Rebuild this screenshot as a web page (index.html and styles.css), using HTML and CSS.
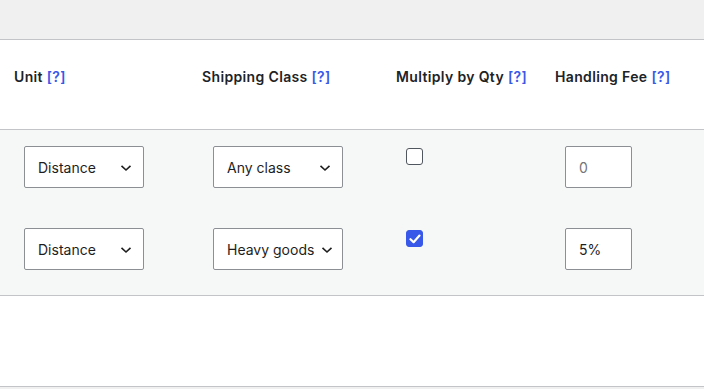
FILE: index.html
```html
<!DOCTYPE html>
<html>
<head>
<meta charset="utf-8">
<link rel="stylesheet" href="styles.css">
</head>
<body>
<div class="topbar"></div>
<div class="table">
  <div class="row head">
    <div class="th">Unit <a class="help">[?]</a></div>
    <div class="th">Shipping Class <a class="help">[?]</a></div>
    <div class="th">Multiply by Qty <a class="help">[?]</a></div>
    <div class="th">Handling Fee <a class="help">[?]</a></div>
  </div>
  <div class="body">
    <div class="row">
      <div class="td"><div class="select unit"><span>Distance</span><svg class="chev" width="12" height="8" viewBox="0 0 12 8"><path d="M1.5 1.8 L6 6 L10.5 1.8" fill="none" stroke="#1e1e1e" stroke-width="1.6"/></svg></div></div>
      <div class="td td2"><div class="select cls"><span>Any class</span><svg class="chev" width="12" height="8" viewBox="0 0 12 8"><path d="M1.5 1.8 L6 6 L10.5 1.8" fill="none" stroke="#1e1e1e" stroke-width="1.6"/></svg></div></div>
      <div class="td"><span class="check"></span></div>
      <div class="td"><div class="input placeholder">0</div></div>
    </div>
    <div class="row">
      <div class="td"><div class="select unit"><span>Distance</span><svg class="chev" width="12" height="8" viewBox="0 0 12 8"><path d="M1.5 1.8 L6 6 L10.5 1.8" fill="none" stroke="#1e1e1e" stroke-width="1.6"/></svg></div></div>
      <div class="td td2"><div class="select cls tight"><span>Heavy goods</span><svg class="chev" width="12" height="8" viewBox="0 0 12 8"><path d="M1.5 1.8 L6 6 L10.5 1.8" fill="none" stroke="#1e1e1e" stroke-width="1.6"/></svg></div></div>
      <div class="td"><span class="check on"><svg width="12" height="10" viewBox="0 0 12 10"><path d="M1.5 5.2 L4.6 8.2 L10.5 1.6" fill="none" stroke="#fff" stroke-width="2.2" stroke-linecap="round" stroke-linejoin="round"/></svg></span></div>
      <div class="td"><div class="input">5%</div></div>
    </div>
  </div>
  <div class="empty"></div>
</div>
<div class="footer"></div>
</body>
</html>
```
FILE: styles.css
```css
html, body {
  margin: 0;
  padding: 0;
  background: #f0f0f0;
  font-family: Inter, "Liberation Sans", Arial, sans-serif;
  color: #1d2327;
}
.topbar {
  height: 39px;
  background: #f0f0f0;
  border-bottom: 1px solid #c3c4c7;
}
.table {
  background: #fff;
}
.row {
  display: grid;
  grid-template-columns: 188px 194px 159px 1fr;
  padding-left: 14px;
}
.head {
  height: 62px;
  padding-top: 27px;
  border-bottom: 1px solid #c3c4c7;
  background: #fff;
}
.th {
  font-size: 14px;
  line-height: 20px;
  font-weight: 600;
  letter-spacing: 0.35px;
  color: #1d2327;
}
.help {
  color: #3858e9;
  font-weight: 600;
}
.body {
  background: #f6f7f7;
  border-bottom: 1px solid #c3c4c7;
  padding-bottom: 1px;
}
.body .row {
  padding-top: 16px;
  padding-bottom: 24px;
}
.td {
  padding-left: 10px;
}
.td2 {
  padding-left: 11px;
}
.select {
  box-sizing: border-box;
  height: 42px;
  border: 1px solid #8c8f94;
  border-radius: 2px;
  background: #fff;
  display: flex;
  align-items: center;
  justify-content: space-between;
  padding: 0 11px 0 13px;
  font-size: 14px;
  color: #1e1e1e;
}
.select.unit { width: 120px; }
.select.cls { width: 130px; }
.select.tight { padding-right: 9px; }
.chev { display: block; margin-top: 1px; }
.check {
  box-sizing: border-box;
  display: flex;
  align-items: center;
  justify-content: center;
  width: 17px;
  height: 17px;
  margin-top: 2px;
  border: 1.5px solid #50575e;
  border-radius: 3px;
  background: #fff;
}
.check.on {
  background: #3858e9;
  border-color: #3858e9;
}
.input {
  box-sizing: border-box;
  width: 67px;
  height: 42px;
  border: 1px solid #8c8f94;
  border-radius: 2px;
  background: #fff;
  display: flex;
  align-items: center;
  padding-left: 13px;
  font-size: 14px;
  color: #1e1e1e;
}
.input.placeholder { color: #757575; }
.empty {
  height: 90px;
  background: #fff;
  border-bottom: 1px solid #c3c4c7;
}
.footer {
  height: 10px;
  background: #f0f0f0;
}
```
